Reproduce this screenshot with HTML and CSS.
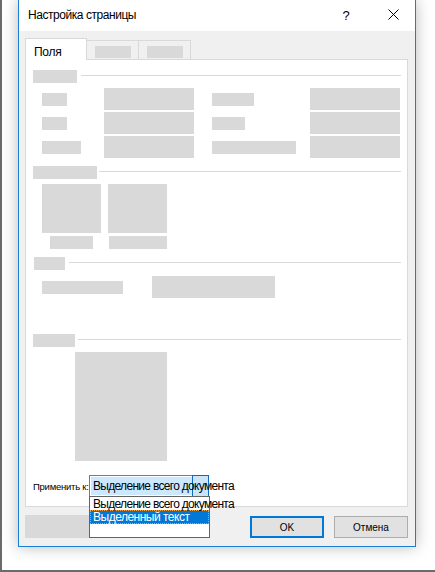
FILE: index.html
```html
<!DOCTYPE html>
<html lang="ru">
<head>
<meta charset="utf-8">
<title>Настройка страницы</title>
<link rel="stylesheet" href="styles.css">
</head>
<body>
<div class="screen">
  <div class="dialog">
    <div class="titlebar">
      <div class="title">Настройка страницы</div>
      <div class="tb-btn help">?</div>
      <div class="tb-btn close">
        <svg width="11" height="11" viewBox="0 0 11 11"><path d="M0.5 0.5 L10.5 10.5 M10.5 0.5 L0.5 10.5" stroke="#000" stroke-width="1" fill="none"/></svg>
      </div>
    </div>
    <div class="body">
      <div class="tabs">
        <div class="tab active">Поля</div>
        <div class="tab"><span class="ph tabph"></span></div>
        <div class="tab"><span class="ph tabph"></span></div>
      </div>
      <div class="panel">
        <div class="sec-head s1"><span class="ph hd" style="width:44px"></span><span class="rule"></span></div>
        <div class="fields">
          <span class="ph lbl" style="width:25px"></span><span class="ph inp"></span><span class="ph lbl rl" style="width:42px"></span><span class="ph inp"></span>
          <span class="ph lbl" style="width:25px"></span><span class="ph inp"></span><span class="ph lbl rl" style="width:33px"></span><span class="ph inp"></span>
          <span class="ph lbl" style="width:39px"></span><span class="ph inp"></span><span class="ph lbl rl" style="width:84px"></span><span class="ph inp"></span>
        </div>
        <div class="sec-head s2"><span class="ph hd" style="width:64px"></span><span class="rule"></span></div>
        <div class="orient">
          <div class="ocol"><span class="ph obox"></span><span class="ph olbl" style="width:43px"></span></div>
          <div class="ocol"><span class="ph obox"></span><span class="ph olbl" style="width:58px"></span></div>
        </div>
        <div class="sec-head s3"><span class="ph hd" style="width:31px"></span><span class="rule"></span></div>
        <div class="pages">
          <span class="ph lbl" style="width:81px"></span><span class="ph pbox"></span>
        </div>
        <div class="sec-head s4"><span class="ph hd" style="width:42px"></span><span class="rule"></span></div>
        <div class="preview"><span class="ph prect"></span></div>
        <div class="apply">
          <span class="apply-lbl">Применить к:</span>
          <div class="combo">
            <span class="sel">Выделение всего документа</span>
            <span class="arrow"></span>
            <div class="list">
              <div class="item">Выделение всего документа</div>
              <div class="item hl">Выделенный текст</div>
            </div>
          </div>
        </div>
      </div>
      <div class="buttons">
        <span class="ph bph"></span>
        <span class="spacer"></span>
        <div class="btn default">OK</div>
        <div class="btn">Отмена</div>
      </div>
    </div>
  </div>
</div>
</body>
</html>
```

FILE: styles.css
```css
html, body {
  margin: 0;
  padding: 0;
  background: #fff;
}
body {
  font-family: "Liberation Sans", Arial, sans-serif;
  color: #000;
}
.screen {
  width: 435px;
  height: 572px;
  box-sizing: border-box;
  border-left: 2px solid #6b6b6b;
  border-bottom: 2px solid #6b6b6b;
  padding-left: 16px;
  overflow: hidden;
}
.dialog {
  width: 398px;
  height: 547px;
  box-sizing: border-box;
  border: 1px solid #1a7fd4;
  border-top: none;
  background: #f0f0f0;
  box-shadow: 0 0 14px rgba(0, 0, 0, 0.28);
  display: flex;
  flex-direction: column;
}
.titlebar {
  height: 31px;
  flex: none;
  background: #fff;
  display: flex;
  align-items: center;
}
.title {
  flex: 1;
  padding-left: 9px;
  font-size: 12px;
  line-height: 14px;
  padding-bottom: 1px;
  letter-spacing: -0.45px;
}
.tb-btn {
  width: 46px;
  height: 31px;
  display: flex;
  align-items: center;
  justify-content: center;
}
.help {
  font-size: 13px;
  padding-bottom: 1px;
  box-sizing: border-box;
}
.close svg { display: block; margin-left: 2px; margin-bottom: 2px; }
.body {
  flex: 1;
  padding: 7px 7px 8px 6px;
  display: flex;
  flex-direction: column;
}
.tabs {
  height: 21px;
  display: flex;
  align-items: flex-end;
}
.tab {
  box-sizing: border-box;
  width: 53px;
  height: 19px;
  margin-left: -1px;
  border: 1px solid #d9d9d9;
  border-bottom: none;
  background: #f0f0f0;
  padding: 5px 0 0 8px;
}
.tab.active {
  width: 62px;
  height: 22px;
  margin-left: 0;
  margin-bottom: -1px;
  background: #fff;
  position: relative;
  z-index: 1;
  font-size: 12px;
  line-height: 14px;
  padding: 6px 0 0 8px;
  letter-spacing: -0.3px;
}
.ph {
  display: block;
  background: #d9d9d9;
  flex: none;
}
.tabph { width: 36px; height: 12px; }
.panel {
  height: 448px;
  box-sizing: border-box;
  border: 1px solid #d9d9d9;
  background: #fff;
  padding: 10px 6px 0 7px;
  display: flex;
  flex-direction: column;
}
.sec-head {
  display: flex;
  align-items: flex-start;
  height: 13px;
  flex: none;
}
.hd { height: 13px; }
.rule {
  flex: 1;
  height: 1px;
  margin-top: 5px;
  background: #d9d9d9;
}
.s1 .rule { margin-left: 4px; }
.s2 { margin-top: 8px; }
.s2 .rule { margin-left: 2px; }
.s3 { margin-top: 8px; padding-left: 1px; }
.s3 .rule { margin-left: 4px; }
.s4 { margin-top: 36px; }
.s4 .rule { margin-left: 3px; }
.fields {
  margin-top: 5px;
  padding-left: 9px;
  display: grid;
  grid-template-columns: 62px 90px 116px 90px;
  grid-auto-rows: 22px;
  row-gap: 2px;
  align-items: center;
}
.lbl { height: 13px; }
.rl { margin-left: 18px; }
.fields .inp { height: 22px; }
.orient {
  margin-top: 5px;
  padding-left: 9px;
  display: flex;
  gap: 7px;
}
.ocol {
  width: 59px;
  display: flex;
  flex-direction: column;
  align-items: center;
  gap: 3px;
}
.obox { width: 59px; height: 49px; }
.olbl { height: 13px; }
.pages {
  margin-top: 6px;
  padding-left: 9px;
  display: flex;
  align-items: center;
  gap: 29px;
}
.pages .lbl { margin-top: 1px; }
.pbox { width: 123px; height: 22px; }
.preview {
  margin-top: 5px;
  padding-left: 42px;
}
.prect { width: 92px; height: 109px; }
.apply {
  margin-top: 14px;
  display: flex;
  align-items: center;
}
.apply-lbl {
  width: 56px;
  flex: none;
  font-size: 9.5px;
  line-height: 12px;
  white-space: nowrap;
  letter-spacing: -0.25px;
  padding-top: 1px;
}
.combo {
  position: relative;
  width: 120px;
  height: 22px;
  flex: none;
  box-sizing: border-box;
  border: 1px solid #7a7a7a;
  border-right: none;
  display: flex;
  background: #fff;
}
.sel {
  flex: 1;
  margin: 1px 0 1px 1px;
  background: #cce8ff;
  font-size: 12px;
  line-height: 19px;
  padding-left: 2px;
  white-space: nowrap;
  letter-spacing: -0.7px;
  position: relative;
  z-index: 1;
  min-width: 0;
  width: 0;
}
.arrow {
  width: 17px;
  flex: none;
  margin: -1px 0;
  box-sizing: border-box;
  border: 1px solid #0f6ac4;
  background: #cce4f7;
}
.list {
  position: absolute;
  z-index: 5;
  top: 100%;
  left: -1px;
  width: 121px;
  height: 42px;
  box-sizing: border-box;
  border: 1px solid #646464;
  background: #fff;
}
.item {
  height: 13px;
  font-size: 12px;
  line-height: 15px;
  padding-left: 3px;
  white-space: nowrap;
  letter-spacing: -0.7px;
}
.item.hl {
  box-sizing: border-box;
  width: 119px;
  height: 14px;
  background: #0078d7;
  color: #fff;
  border: 1px dotted #f2a040;
  padding-left: 2px;
  line-height: 12px;
  letter-spacing: -0.5px;
}
.buttons {
  margin-top: 8px;
  height: 23px;
  display: flex;
  align-items: flex-start;
}
.bph { width: 89px; height: 23px; }
.spacer { flex: 1; }
.btn {
  width: 74px;
  height: 22px;
  margin-top: 1px;
  box-sizing: border-box;
  border: 1px solid #adadad;
  background: #e1e1e1;
  font-size: 10px;
  display: flex;
  align-items: center;
  justify-content: center;
}
.btn.default {
  border: 2px solid #0078d7;
  margin-right: 10px;
}
```
